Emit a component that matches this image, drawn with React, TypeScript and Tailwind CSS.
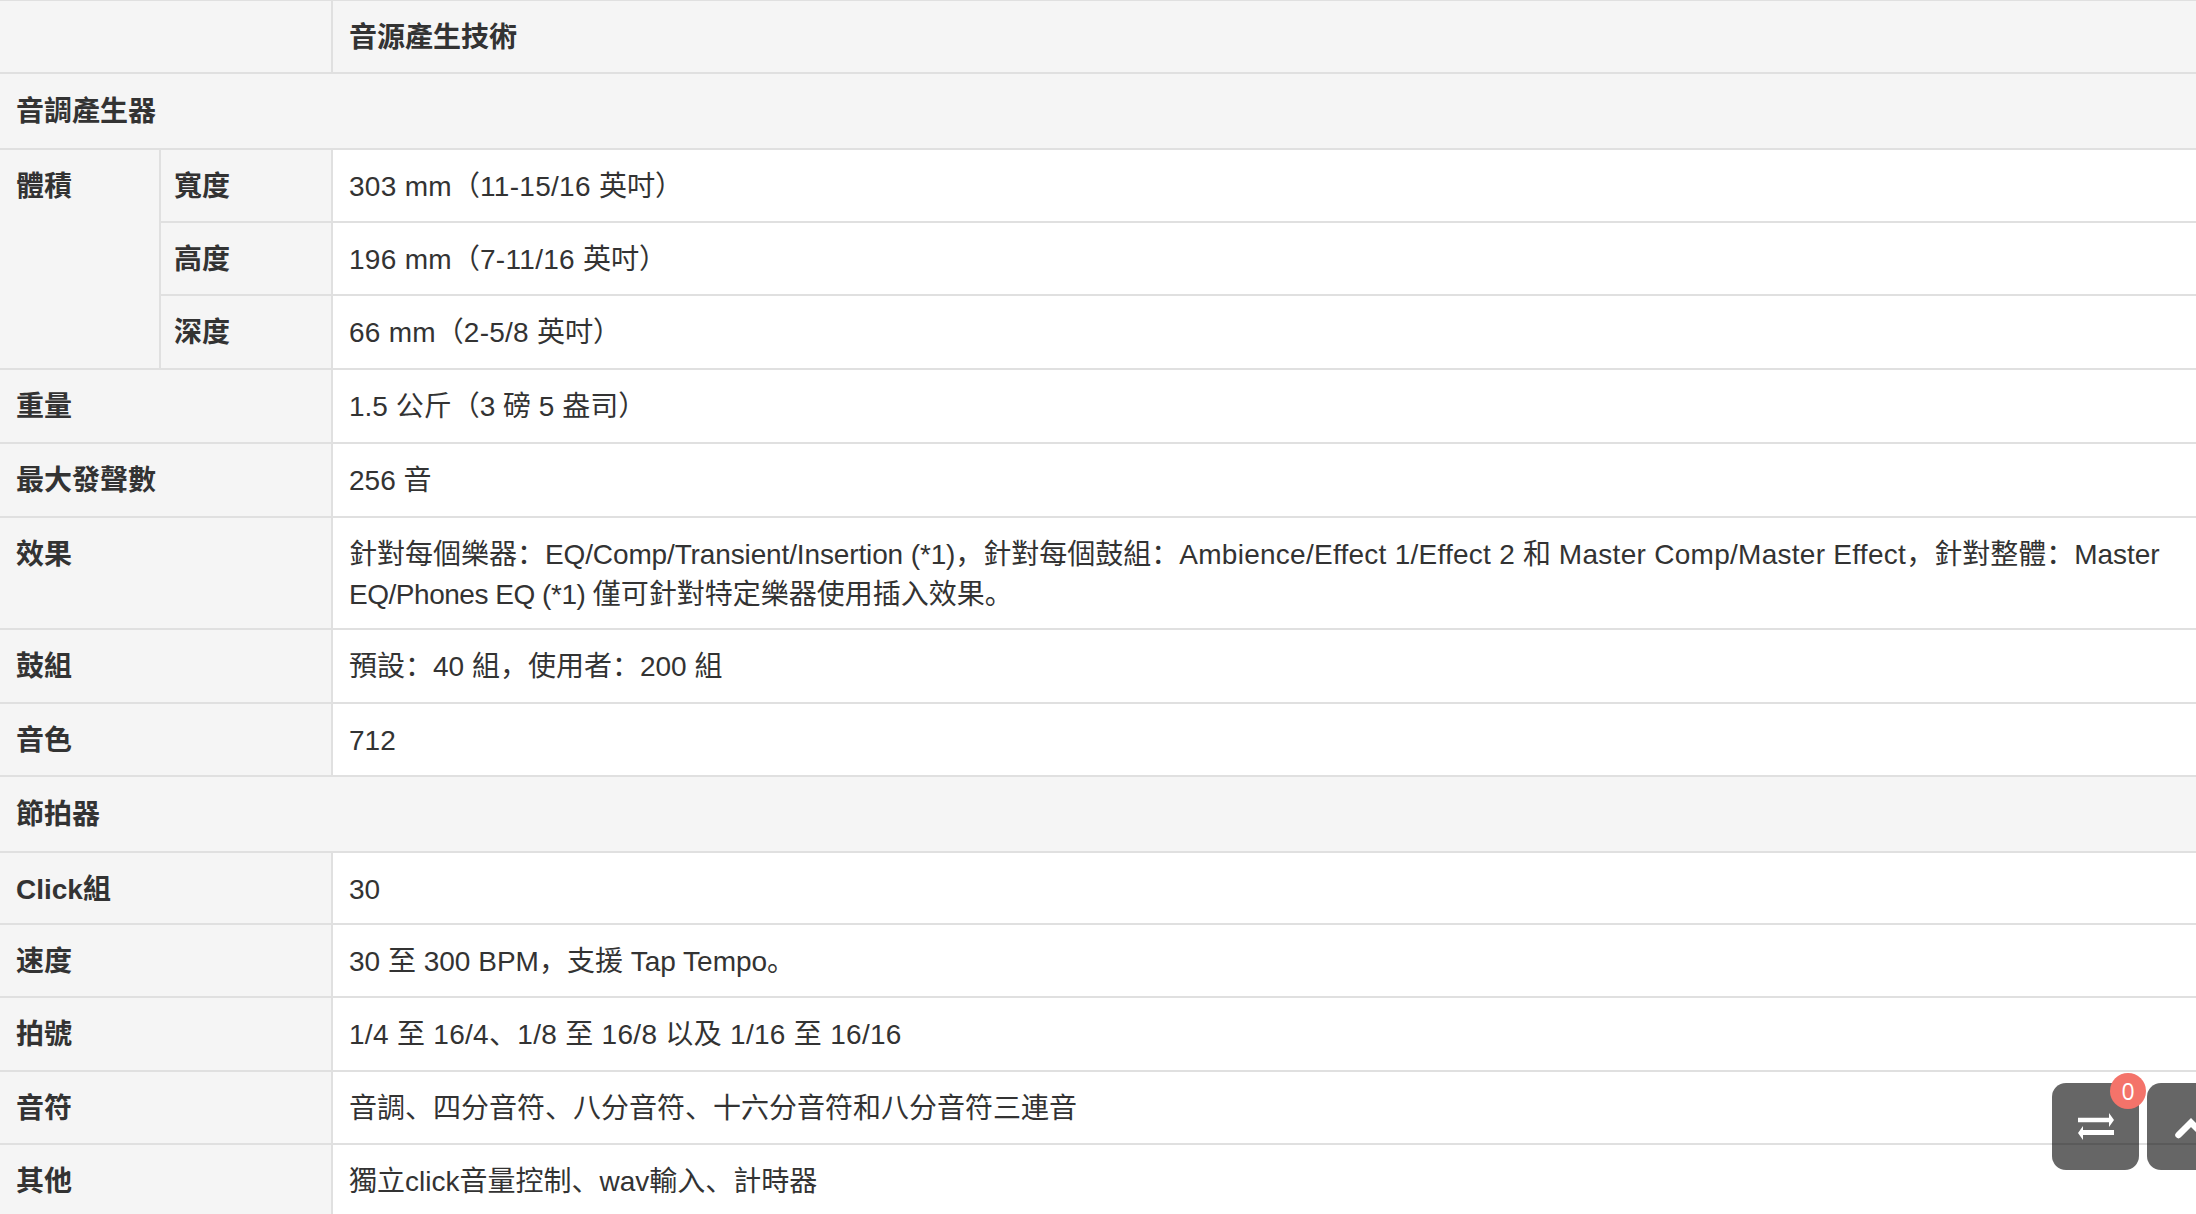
const rows = [
  { label: "重量", value: "1.5 公斤（3 磅 5 盎司）", h: "h-[74px]" },
  { label: "最大發聲數", value: "256 音", h: "h-[74px]" },
  { label: "鼓組", value: "預設：40 組，使用者：200 組", h: "h-[74px]" },
  { label: "音色", value: "712", h: "h-[73px]" },
];

const clickRows = [
  { label: "Click組", value: "30", h: "h-[72px]" },
  { label: "速度", value: "30 至 300 BPM，支援 Tap Tempo。", h: "h-[73px]" },
  { label: "拍號", value: "1/4 至 16/4、1/8 至 16/8 以及 1/16 至 16/16", h: "h-[74px]", wide: true },
  { label: "音符", value: "音調、四分音符、八分音符、十六分音符和八分音符三連音", h: "h-[73px]" },
  { label: "其他", value: "獨立click音量控制、wav輸入、計時器", h: "h-[74px]" },
];

const th = "border-2 border-[#e0e0e0] bg-[#f5f5f5] px-4 pt-[17px] text-left align-top font-bold";
const sub = "border-2 border-[#e0e0e0] bg-[#f5f5f5] pl-[13px] pr-4 pt-[17px] text-left align-top font-bold";
const section = "border-2 border-[#e0e0e0] bg-[#f5f5f5] px-4 pt-[18px] text-left align-top font-bold";
const td = "border-2 border-[#e0e0e0] bg-white px-4 pt-[17px] text-left align-top font-normal";

const Row = ({ label, value, h, wide }: { label: string; value: string; h: string; wide?: boolean }) => (
  <tr className={h}>
    <th colSpan={2} className={th}>
      {label}
    </th>
    <td className={wide ? `${td} tracking-[0.3px]` : td}>{value}</td>
  </tr>
);

export default function App() {
  return (
    <div className="relative h-screen w-full overflow-hidden bg-white font-['Liberation_Sans','Noto_Sans_CJK_SC',sans-serif] text-[28px] leading-[40px] text-[#333]">
      <table className="-mt-px w-[2202px] -translate-x-0.5 table-fixed border-collapse">
        <colgroup>
          <col className="w-[161px]" />
          <col className="w-[172px]" />
          <col />
        </colgroup>
        <tbody>
          <tr className="h-[73px]">
            <th colSpan={2} className={th}></th>
            <th className={th}>音源產生技術</th>
          </tr>
          <tr className="h-[76px]">
            <th colSpan={3} className={section}>
              音調產生器
            </th>
          </tr>
          <tr className="h-[73px]">
            <th rowSpan={3} className={th}>
              體積
            </th>
            <th className={sub}>寬度</th>
            <td className={td}>
              <span className="tracking-[0.3px]">303 mm</span>（<span className="tracking-[0.3px]">11-15/16 </span>英吋）
            </td>
          </tr>
          <tr className="h-[73px]">
            <th className={sub}>高度</th>
            <td className={td}>
              <span className="tracking-[0.3px]">196 mm</span>（<span className="tracking-[0.3px]">7-11/16 </span>英吋）
            </td>
          </tr>
          <tr className="h-[74px]">
            <th className={sub}>深度</th>
            <td className={td}>
              <span className="tracking-[0.25px]">66 mm</span>（<span className="tracking-[0.25px]">2-5/8 </span>英吋）
            </td>
          </tr>
          {rows.slice(0, 2).map((r) => (
            <Row key={r.label} {...r} />
          ))}
          <tr className="h-[112px]">
            <th colSpan={2} className={th}>
              效果
            </th>
            <td className={td}>
              針對每個樂器：<span className="tracking-[-0.13px]">EQ/Comp/Transient/Insertion (*1)</span>，針對每個鼓組：
              <span className="tracking-[0.26px]">Ambience/Effect 1/Effect 2 </span>和{" "}
              <span className="tracking-[0.28px]">Master Comp/Master Effect</span>，針對整體：Master{" "}
              <span className="tracking-[-0.47px]">EQ/Phones EQ (*1) </span>僅可針對特定樂器使用插入效果。
            </td>
          </tr>
          {rows.slice(2).map((r) => (
            <Row key={r.label} {...r} />
          ))}
          <tr className="h-[76px]">
            <th colSpan={3} className={section}>
              節拍器
            </th>
          </tr>
          {clickRows.map((r) => (
            <Row key={r.label} {...r} />
          ))}
        </tbody>
      </table>

      <div className="absolute bottom-[44px] right-[-38px] flex gap-2">
        <div className="relative flex h-[87px] w-[87px] items-center justify-center rounded-[14px] bg-[rgba(0,0,0,0.6)]">
          <svg width="36" height="27" viewBox="0 0 36 27" fill="#fff">
            <path d="M0 4.7h31V0l5 7-5 7V9.3H0z" />
            <path d="M36 17H5v-4l-5 7 5 7v-5h31z" />
          </svg>
          <span className="absolute -right-[7px] -top-[10px] flex h-9 w-9 items-center justify-center rounded-full bg-[#f4736a] font-['Open_Sans',sans-serif] text-[23px] leading-none text-white">
            0
          </span>
        </div>
        <div className="flex h-[87px] w-[87px] items-center justify-center rounded-[14px] bg-[rgba(0,0,0,0.6)]">
          <svg width="36" height="24" viewBox="0 0 36 24" fill="none" stroke="#fff" strokeWidth="6.5" strokeLinecap="round">
            <path d="M5.5 20 18 7.5 30.5 20" />
          </svg>
        </div>
      </div>
    </div>
  );
}
